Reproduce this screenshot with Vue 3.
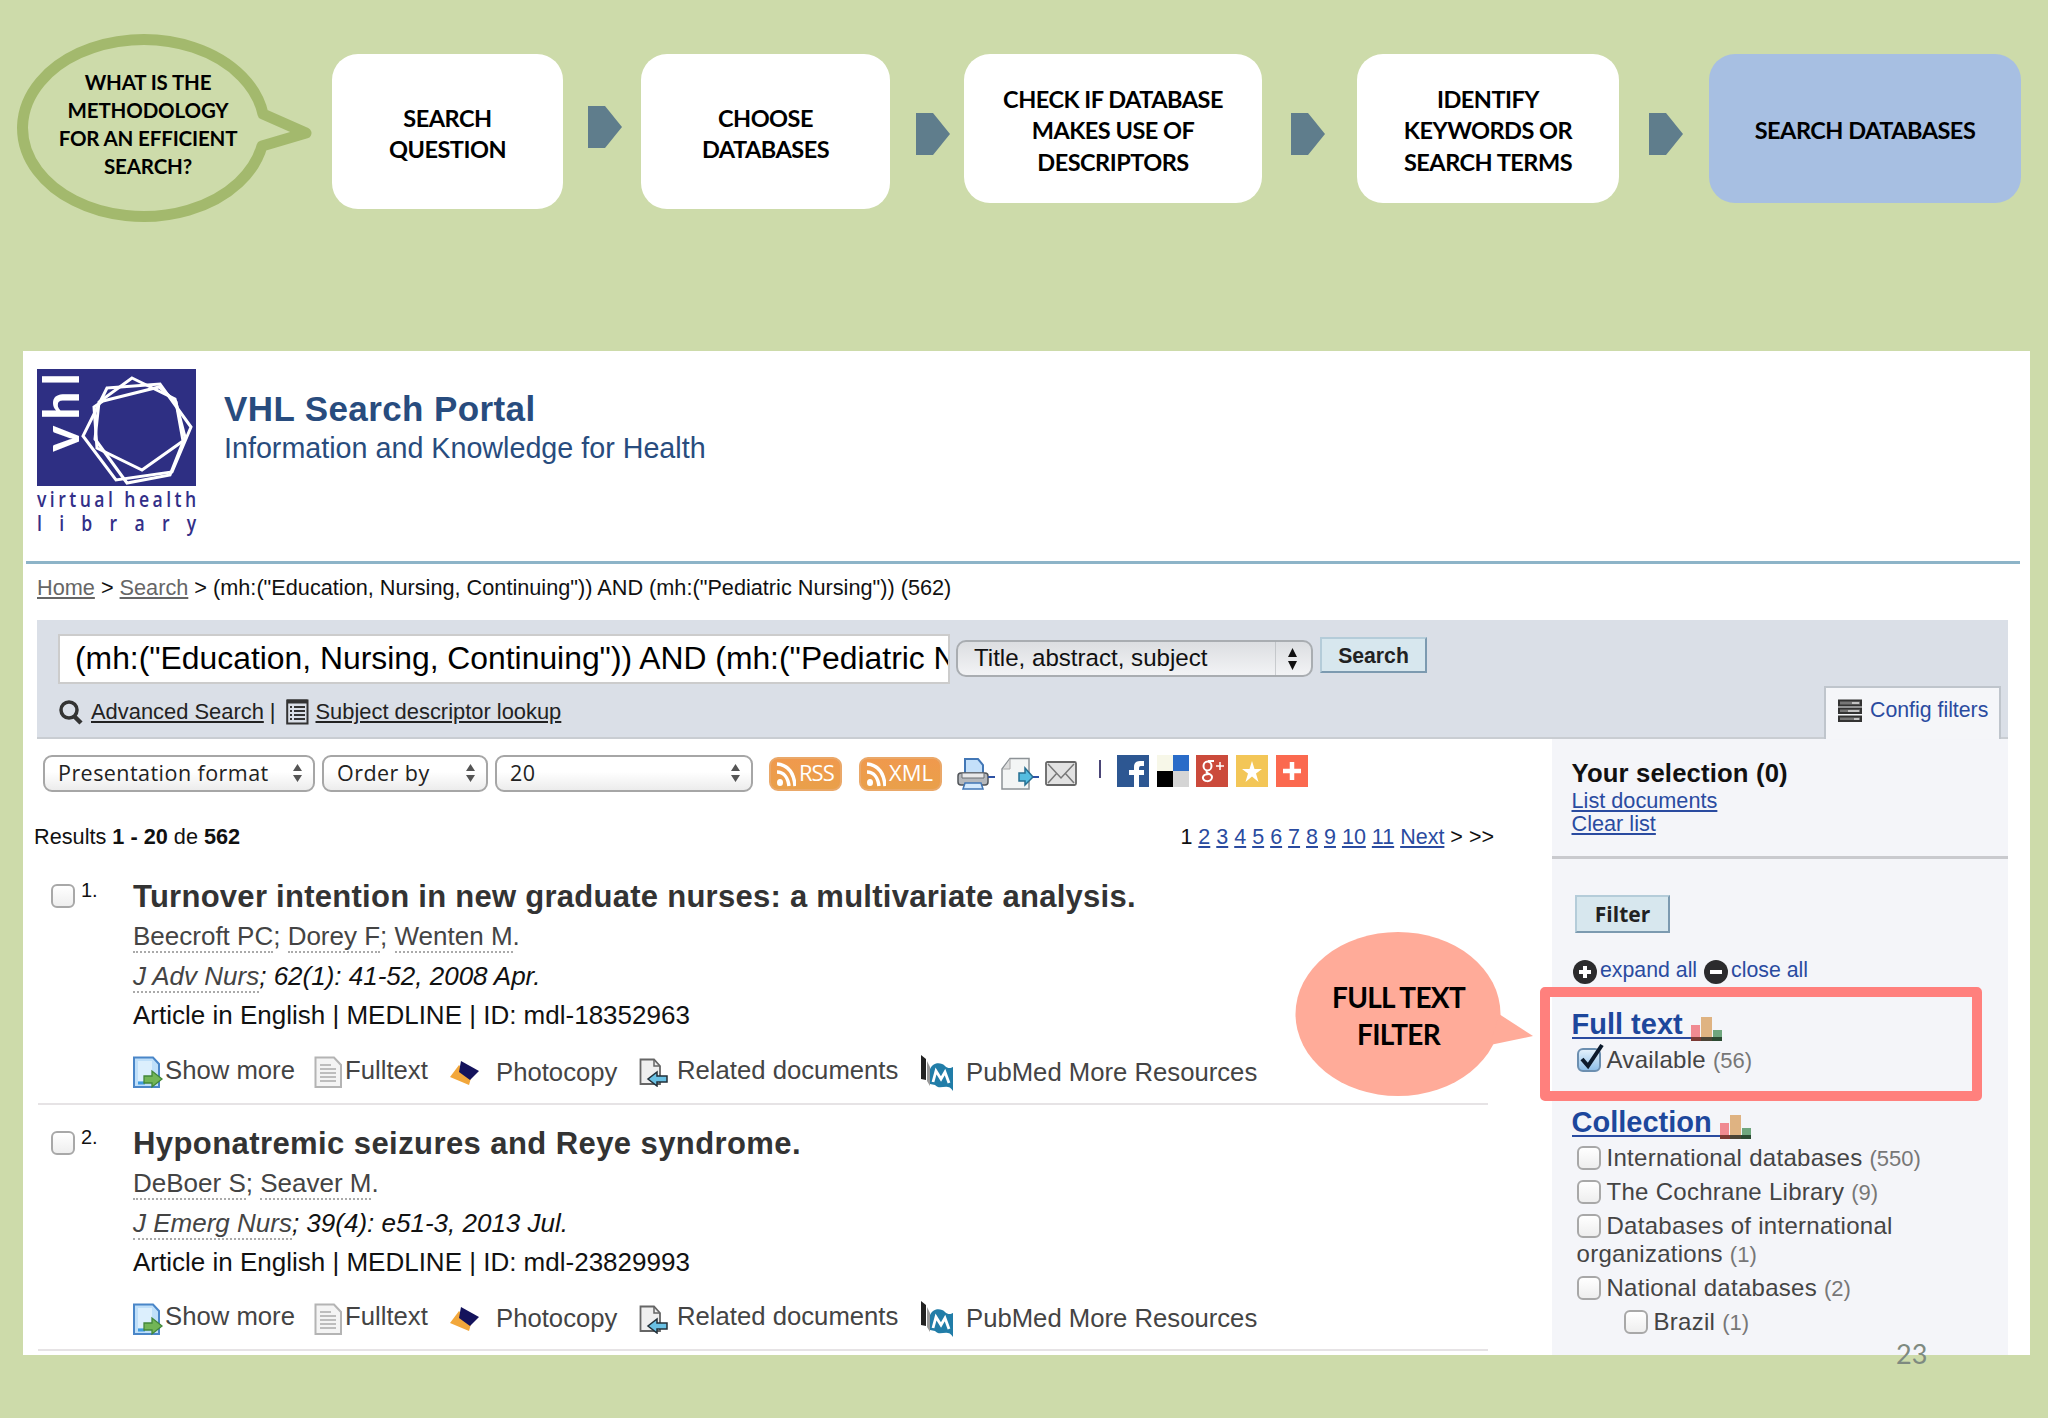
<template>
  <div class="slide">
    <!-- Methodology steps -->
    <div class="steps">
      <div class="bubble">
        <svg class="bubble-shape" width="300" height="196" viewBox="0 0 300 196">
          <path d="M 250 85 A 121 88.500 0 1 0 249 117 L 293 104 Z" fill="none" stroke="#a3b96d" stroke-width="11" stroke-linejoin="round" />
        </svg>
        <p class="bubble-text">WHAT IS THE<br />METHODOLOGY<br />FOR AN EFFICIENT<br />SEARCH?</p>
      </div>
      <template v-for="step in steps" :key="step.id">
        <div class="step" :class="'step-' + step.id">
          <span v-for="line in step.lines" :key="line">{{ line }}</span>
        </div>
        <svg v-if="step.id < 5" class="arrow" :class="'arrow-' + step.id" width="34" height="42" viewBox="0 0 34 42">
          <path d="M0 0H17L34 21L17 42H0Z" fill="#5f7d8c" />
        </svg>
      </template>
    </div>

    <!-- Search portal -->
    <div class="portal">
      <div class="header">
        <svg class="logo" width="160" height="176" viewBox="0 0 160 176">
          <rect width="159" height="117" fill="#2e2f83" />
          <g fill="none" stroke="#fff" stroke-width="3">
            <path d="M95 9L138 30L148 68L133 106L90 114L58 70L62 33Z" />
            <path d="M70 19L123 15L154 58L135 103L79 111L46 67Z" />
            <path d="M66 32L122 18L139 33L146 72L105 101L60 79L57 38Z" />
          </g>
          <text class="logo-vhl" transform="translate(42 83) rotate(-90)" textLength="79">vhl</text>
          <text class="logo-text" transform="scale(0.8 1)" x="0" y="138" textLength="199">virtual health</text>
          <text class="logo-text" transform="scale(0.8 1)" x="0" y="162" textLength="199">library</text>
        </svg>
        <div class="titles">
          <h1>VHL Search Portal</h1>
          <h2>Information and Knowledge for Health</h2>
        </div>
      </div>

      <div class="breadcrumb">
        <a>Home</a> &gt; <a>Search</a> &gt; (mh:("Education, Nursing, Continuing")) AND (mh:("Pediatric Nursing")) (562)
      </div>

      <div class="search">
        <div class="search-row">
          <div class="query">(mh:("Education, Nursing, Continuing")) AND (mh:("Pediatric N</div>
          <div class="field">
            <span>Title, abstract, subject</span>
            <svg width="36" height="37" viewBox="0 0 36 37">
              <path d="M0 1V36" stroke="#a5a9ad" stroke-width="1" />
              <path d="M13 17L17.500 8L22 17ZM13 21L17.500 30L22 21Z" fill="#111" />
            </svg>
          </div>
          <div class="btn btn-search">Search</div>
        </div>
        <div class="search-links">
          <svg width="25" height="26" viewBox="0 0 25 26">
            <circle cx="10" cy="11" r="8" fill="none" stroke="#333" stroke-width="3.500" />
            <path d="M15 17L22 24" stroke="#333" stroke-width="4.500" />
          </svg>
          <a class="advanced">Advanced Search</a>
          <span class="bar">|</span>
          <svg width="23" height="26" viewBox="0 0 23 26">
            <path d="M1.200 1.500H21.500V24.500H1.200Z" fill="none" stroke="#333" stroke-width="2" />
            <path d="M1 2.500H21.500" stroke="#333" stroke-width="4" />
            <path d="M4 8H6M8 8H19M4 12H6M8 12H19M4 16H6M8 16H19M4 20H6M8 20H19" stroke="#333" stroke-width="2" />
          </svg>
          <a class="lookup">Subject descriptor lookup</a>
          <div class="tab">
            <svg width="25" height="24" viewBox="0 0 25 24">
              <path d="M1 1.500H23V6.500H1ZM1 9.500H23V14H1ZM1 17.500H23V22H1Z" fill="#777" stroke="#333" stroke-width="2" />
              <path d="M14 4H21M10 12H21M16 20H21" stroke="#ddd" stroke-width="1.500" />
            </svg>
            <span>Config filters</span>
          </div>
        </div>
      </div>

      <div class="content">
        <div class="main">
          <div class="toolbar">
            <div v-for="item in selects" :key="item.label" class="select" :class="item.size">
              <span>{{ item.label }}</span>
              <svg width="9" height="18" viewBox="0 0 9 18"><path d="M0 7L4.500 0L9 7ZM0 11L4.500 18L9 11Z" fill="#555" /></svg>
            </div>
            <div v-for="feed in ['RSS', 'XML']" :key="feed" class="feed" :class="feed.toLowerCase()">
              <svg width="20" height="26" viewBox="0 0 20 26">
                <g fill="none" stroke="#fff" stroke-width="3.500">
                  <path d="M1 3C12 4 18 12 19 25" />
                  <path d="M1 11C8 11 12 17 13 25" />
                </g>
                <ellipse cx="4" cy="21.500" rx="3" ry="3.500" fill="#fff" />
              </svg>
              <span>{{ feed }}</span>
            </div>
            <svg class="printer" width="38" height="34" viewBox="0 0 38 34">
              <path d="M8 2H21L26 8V18H8Z" fill="#c4e0fa" stroke="#4277b6" stroke-width="2" />
              <rect x="1" y="16" width="30" height="12" rx="3" fill="#b5b8bc" stroke="#505459" stroke-width="1.500" />
              <path d="M5 16H27V21H5Z" fill="#e9e9ea" stroke="#6a6e73" />
              <path d="M8 26H24L26 32H6Z" fill="#d5eafd" stroke="#4277b6" stroke-width="1.500" />
              <path d="M31 20H38" stroke="#2d51a3" stroke-width="2" />
            </svg>
            <svg class="export" width="38" height="34" viewBox="0 0 38 34">
              <path d="M9 1.500H28V32H1V12Z" fill="#f3f5f5" stroke="#8d9296" stroke-width="1.500" />
              <path d="M2 12H9V2" fill="#ddd" stroke="#aaa" />
              <path d="M18 16H24V11L32 20L24 28V24H18Z" fill="#55bde0" stroke="#276f91" stroke-width="1.500" />
              <path d="M32 20H38" stroke="#2d51a3" stroke-width="2" />
            </svg>
            <svg class="mail" width="32" height="25" viewBox="0 0 32 25">
              <rect x="1" y="1" width="30" height="23" rx="1.500" fill="#e2e2e2" stroke="#666" stroke-width="1.800" />
              <path d="M3 3L16 17L29 3M3 22L12 12M29 22L20 12" fill="none" stroke="#777" stroke-width="1.500" />
            </svg>
            <span class="separator"></span>
            <div class="social">
              <svg width="32" height="32" viewBox="0 0 32 32">
                <rect width="32" height="32" fill="#2d5792" />
                <path d="M17 32V20H12V15H17V12C17 8 19 6 23 6H27V11H24C22 11 22 12 22 15H27V20H22V32Z" fill="#fff" />
              </svg>
              <svg width="32" height="32" viewBox="0 0 32 32">
                <path d="M0 0H16V16H0Z" fill="#f7f7e8" />
                <path d="M16 0H32V16H16Z" fill="#2a6cc8" />
                <path d="M0 16H16V32H0Z" fill="#000" />
                <path d="M16 16H32V32H16Z" fill="#d5d5d5" />
              </svg>
              <svg width="32" height="32" viewBox="0 0 32 32">
                <rect width="32" height="32" fill="#cb4a3b" />
                <g fill="none" stroke="#fff" stroke-width="2">
                  <ellipse cx="11.500" cy="11" rx="4" ry="4.500" />
                  <path d="M18 6H12M11 16C9 19 16 18 16 22C16 28 6 27 7 22C8 19 12 19 13 19" />
                  <path d="M20 11H28M24 7V15" stroke-width="1.500" />
                </g>
              </svg>
              <svg width="32" height="32" viewBox="0 0 32 32">
                <rect width="32" height="32" fill="#f3c657" />
                <path d="M16 6L18.500 14H26L20 18.500L22.500 27L16 21.500L9.500 27L12 18.500L6 14H13.500Z" fill="#fff" />
              </svg>
              <svg width="32" height="32" viewBox="0 0 32 32">
                <rect width="32" height="32" fill="#fb694f" />
                <path d="M16 7V25M7 16H25" stroke="#fff" stroke-width="4.500" />
              </svg>
            </div>
          </div>

          <div class="summary">
            <div class="count">Results <b>1 - 20</b> de <b>562</b></div>
            <div class="pages">1 <template v-for="page in pages" :key="page"><a>{{ page }}</a>&nbsp;</template>&gt; &gt;&gt;</div>
          </div>

          <!-- Result list -->
          <div v-for="result in results" :key="result.number" class="result">
            <span class="check"></span>
            <span class="number">{{ result.number }}.</span>
            <div class="record">
              <h3 :class="'title-' + result.number">{{ result.title }}</h3>
              <p class="authors">
                <template v-for="(author, i) in result.authors" :key="author">
                  <a>{{ author }}</a>{{ i < result.authors.length - 1 ? '; ' : '.' }}
                </template>
              </p>
              <p class="journal"><a>{{ result.journal }}</a>{{ result.issue }}</p>
              <p class="source">Article in English | MEDLINE | ID: {{ result.mdl }}</p>
              <div class="actions">
                <svg width="31" height="33" viewBox="0 0 31 33">
                  <path d="M1 1.500H20L26 8V31H1Z" fill="#bfdff9" stroke="#4a86c8" stroke-width="2" />
                  <path d="M5 5H19V25H5Z" fill="#dceffd" />
                  <path d="M5 27H12" stroke="#3f9be0" stroke-width="3" />
                  <path d="M11 20H19V15L29 23L19 31V27H11Z" fill="#72b556" stroke="#42873a" stroke-width="1.300" />
                </svg>
                <span class="more">Show more</span>
                <svg width="29" height="33" viewBox="0 0 29 33">
                  <path d="M1.500 1.500H20L27 9V31H1.500Z" fill="#f4f4f4" stroke="#b4b4b4" stroke-width="2" />
                  <path d="M6 9H17M6 13H22M6 17H22M6 21H22M6 25H22" stroke="#aaa" stroke-width="1.500" />
                </svg>
                <span class="fulltext">Fulltext</span>
                <svg class="diamond" width="30" height="26" viewBox="0 0 30 26">
                  <path d="M9 5L0 17L19 25L21 18Z" fill="#f2a73b" />
                  <path d="M11 1L29 11L20 20L9 12Z" fill="#14135c" />
                </svg>
                <span class="photocopy">Photocopy</span>
                <svg class="related-icon" width="29" height="29" viewBox="0 0 29 29">
                  <path d="M1.500 1.500H15L21 8V26H1.500Z" fill="#efefef" stroke="#666" stroke-width="1.800" />
                  <path d="M15 1.500V8H21" fill="none" stroke="#666" stroke-width="1.500" />
                  <path d="M28 18H18V14L9 21L18 28V24H28Z" fill="#6ac1e4" stroke="#222f38" stroke-width="1.500" />
                </svg>
                <span class="related">Related documents</span>
                <svg class="pubmed-icon" width="33" height="36" viewBox="0 0 33 36">
                  <path d="M0 0L5 4V25L0 24Z" fill="#222" />
                  <path d="M6 6L9 12V31L6 26Z" fill="#999" />
                  <path d="M9 14C13 6 21 8 24 11C27 14 30 13 32 12V36C27 27 19 36 14 30L9 29Z" fill="#217da8" />
                  <path d="M12 27L15 16L20 24L24 17L28 28" fill="none" stroke="#fff" stroke-width="2.800" />
                </svg>
                <span class="pubmed">PubMed More Resources</span>
              </div>
            </div>
          </div>
        </div>

        <!-- Filter column -->
        <div class="sidebar">
          <div class="selection">
            <h4>Your selection (0)</h4>
            <a>List documents</a>
            <a>Clear list</a>
          </div>
          <div class="btn btn-filter">Filter</div>
          <div class="toggles">
            <svg width="24" height="24" viewBox="0 0 24 24">
              <circle cx="12" cy="12" r="12" fill="#2b2b2d" />
              <path d="M12 6V18M6 12H18" stroke="#fff" stroke-width="4" />
            </svg>
            <span class="expand">expand all</span>
            <svg width="24" height="24" viewBox="0 0 24 24">
              <circle cx="12" cy="12" r="12" fill="#2b2b2d" />
              <path d="M6 12H18" stroke="#fff" stroke-width="4" />
            </svg>
            <span>close all</span>
          </div>
          <div v-for="group in groups" :key="group.name" class="group">
            <div class="group-title">
              <span>{{ group.name }}</span>
              <svg width="31" height="24" viewBox="0 0 31 24">
                <rect y="8" width="9" height="13" fill="#f08a92" />
                <rect x="10" width="11" height="21" fill="#dfb382" />
                <rect x="22" y="13" width="9" height="8" fill="#6fa67e" />
                <rect y="20" width="31" height="4" fill="#4b4436" />
                <rect y="20" width="10" height="4" fill="#7c3a35" />
                <rect x="21" y="20" width="10" height="4" fill="#2b4a32" />
              </svg>
            </div>
            <p v-for="item in group.items" :key="item.name" class="item" :class="{ nested: item.nested }">
              <span class="check" :class="{ checked: item.checked }">
                <svg v-if="item.checked" width="30" height="30" viewBox="0 0 30 30"><path d="M5 16L11 23L25 2" fill="none" stroke="#0c1a2c" stroke-width="4" /></svg>
              </span>{{ item.name }} <small>({{ item.count }})</small>
            </p>
          </div>
        </div>
      </div>
    </div>

    <!-- Annotations over the portal -->
    <div class="highlight"></div>
    <div class="callout">
      <svg class="callout-shape" width="240" height="166" viewBox="0 0 240 166">
        <ellipse cx="103" cy="83" rx="102.500" ry="82" fill="#ffab99" />
        <path d="M204 83L238 105L195 114Z" fill="#ffab99" />
      </svg>
      <p>FULL TEXT<br />FILTER</p>
    </div>
    <div class="page-number">23</div>
  </div>
</template>

<script setup>
import { ref } from 'vue';

const steps = ref([
  { id: 1, lines: ['SEARCH', 'QUESTION'] },
  { id: 2, lines: ['CHOOSE', 'DATABASES'] },
  { id: 3, lines: ['CHECK IF DATABASE', 'MAKES USE OF', 'DESCRIPTORS'] },
  { id: 4, lines: ['IDENTIFY', 'KEYWORDS OR', 'SEARCH TERMS'] },
  { id: 5, lines: ['SEARCH DATABASES'] },
]);

const selects = ref([
  { label: 'Presentation format', size: 'large' },
  { label: 'Order by', size: 'small' },
  { label: '20', size: 'medium' },
]);

const pages = ['2', '3', '4', '5', '6', '7', '8', '9', '10', '11', 'Next'];

const results = ref([
  {
    number: 1,
    title: 'Turnover intention in new graduate nurses: a multivariate analysis.',
    authors: ['Beecroft PC', 'Dorey F', 'Wenten M'],
    journal: 'J Adv Nurs',
    issue: '; 62(1): 41-52, 2008 Apr.',
    mdl: 'mdl-18352963',
  },
  {
    number: 2,
    title: 'Hyponatremic seizures and Reye syndrome.',
    authors: ['DeBoer S', 'Seaver M'],
    journal: 'J Emerg Nurs',
    issue: '; 39(4): e51-3, 2013 Jul.',
    mdl: 'mdl-23829993',
  },
]);

const groups = ref([
  { name: 'Full text', items: [{ name: 'Available', count: 56, checked: true }] },
  {
    name: 'Collection',
    items: [
      { name: 'International databases', count: 550 },
      { name: 'The Cochrane Library', count: 9 },
      { name: 'Databases of international organizations', count: 1 },
      { name: 'National databases', count: 2 },
      { name: 'Brazil', count: 1, nested: true },
    ],
  },
]);
</script>

<style>
body {
  margin: 0;
}
</style>

<style scoped>
.slide {
  position: relative;
  width: 2048px;
  height: 1418px;
  overflow: hidden;
  background: #cddbaa;
  font-family: "Liberation Sans", Arial, sans-serif;
  color: #111;
}

h1, h2, h3, h4, p {
  margin: 0;
  white-space: nowrap;
}

svg {
  flex: none;
  display: block;
}

/* Steps */
.steps {
  display: flex;
  align-items: flex-start;
  height: 351px;
  box-sizing: border-box;
  padding: 29px 0 0 13px;
  font-family: Lato, sans-serif;
  font-weight: bold;
  color: #000;
}

.bubble {
  display: grid;
  width: 319px;
}

.bubble-shape, .bubble-text {
  grid-area: 1 / 1;
}

.bubble-text {
  width: 270px;
  padding-top: 39px;
  text-align: center;
  font-size: 20.500px;
  line-height: 28px;
  letter-spacing: -0.150px;
}

.step {
  display: flex;
  flex: none;
  flex-direction: column;
  align-items: center;
  justify-content: center;
  height: 149px;
  margin-top: 25px;
  padding-top: 5px;
  box-sizing: border-box;
  border-radius: 26px;
  background: #fff;
  font-size: 23.500px;
  line-height: 31.300px;
  letter-spacing: -0.500px;
  white-space: nowrap;
}

.step-1 { width: 231px; height: 155px; }
.step-2 { width: 249px; height: 155px; }
.step-3 { width: 298px; }
.step-4 { width: 262px; }
.step-5 { width: 312px; background: #a7bfe2; }

.arrow {
  margin-top: 84px;
}

.arrow-1 { margin: 77px 19px 0 25px; }
.arrow-2 { margin-left: 26px; margin-right: 14px; }
.arrow-3 { margin-left: 29px; margin-right: 32px; }
.arrow-4 { margin-left: 30px; margin-right: 26px; }

/* Portal */
.portal {
  width: 2007px;
  height: 1004px;
  margin-left: 23px;
  overflow: hidden;
  background: #fff;
}

.header {
  display: flex;
  height: 210px;
  margin: 0 10px 0 3px;
  padding: 0 0 0 11px;
  border-bottom: 3px solid #8db4c8;
}

.logo {
  margin-top: 18px;
  overflow: visible;
}

.logo-vhl {
  font: bold 50px Lato, sans-serif;
  fill: #fff;
}

.logo-text {
  font: 600 22px "Open Sans", sans-serif;
  fill: #332f88;
}

.titles {
  padding: 36px 0 0 27px;
  color: #284c7e;
}

h1 {
  font-size: 35px;
  line-height: 44px;
  letter-spacing: 0.400px;
}

h2 {
  font-size: 28.700px;
  font-weight: normal;
  line-height: 34px;
}

.breadcrumb {
  height: 56px;
  padding-left: 14px;
  font-size: 21.700px;
  line-height: 48px;
  white-space: nowrap;
}

.breadcrumb a {
  color: #666;
  text-decoration: underline;
}

/* Search area */
.search {
  width: 1971px;
  height: 119px;
  margin-left: 14px;
  box-sizing: border-box;
  padding-top: 14px;
  border-bottom: 2px solid #c9cdd2;
  background: #dadfe7;
}

.search-row {
  display: flex;
  padding-left: 21px;
}

.query {
  width: 892px;
  height: 50px;
  box-sizing: border-box;
  padding-left: 15px;
  border: 2px solid #ccc;
  background: #fff;
  overflow: hidden;
  font-size: 31.850px;
  line-height: 45px;
  white-space: nowrap;
  color: #000;
}

.field {
  display: flex;
  justify-content: space-between;
  width: 357px;
  height: 37px;
  margin: 6px 0 0 6px;
  box-sizing: border-box;
  padding-left: 16px;
  border: 2px solid #a9adb1;
  border-radius: 10px;
  background: linear-gradient(#dcdee1, #f2f3f5);
  font-size: 24.100px;
  line-height: 31px;
}

.field svg {
  margin-top: -2px;
}

.btn {
  box-sizing: border-box;
  border: 2px solid #b4ccd9;
  border-right-color: #7c9ab0;
  border-bottom-color: #7c9ab0;
  background: #d7e7ee;
  font-weight: bold;
  text-align: center;
  color: #222;
}

.btn-search {
  width: 107px;
  height: 36px;
  margin: 3px 0 0 7px;
  font-size: 21.200px;
  line-height: 33px;
}

.search-links {
  display: flex;
  align-items: center;
  height: 55px;
  padding-left: 22px;
  font-size: 21.900px;
  color: #222;
}

.search-links > a {
  text-decoration: underline;
}

.advanced {
  margin-left: 7px;
}

.bar {
  margin: 0 10px 0 6px;
}

.lookup {
  margin-left: 7px;
}

.tab {
  display: flex;
  align-items: center;
  gap: 7px;
  width: 177px;
  height: 53px;
  margin: 2px 7px 0 auto;
  box-sizing: border-box;
  padding: 0 0 6px 12px;
  border: 2px solid #bfc5cc;
  border-bottom: 0;
  background: #f5f6f9;
  font-size: 21.300px;
  color: #2a4ba0;
}

/* Toolbar */
.content {
  display: flex;
}

.main {
  flex: none;
  width: 1529px;
}

.toolbar {
  display: flex;
  align-items: center;
  height: 37px;
  padding: 16px 0 0 20px;
}

.select {
  display: flex;
  align-items: center;
  justify-content: space-between;
  height: 37px;
  box-sizing: border-box;
  padding: 0 11px 2px 13px;
  border: 2px solid #a6a6a6;
  border-radius: 9px;
  background: linear-gradient(#fff 45%, #ececec);
  font-family: "Open Sans", sans-serif;
  font-size: 21.500px;
  letter-spacing: 0.450px;
  color: #222;
}

.select.large { width: 272px; }
.select.small { width: 166px; margin: 0 7px; }
.select.medium { width: 258px; }

.feed {
  display: flex;
  align-items: center;
  height: 34px;
  box-sizing: border-box;
  padding-left: 5px;
  border: 2px solid #eaa869;
  border-radius: 9px;
  background: linear-gradient(#f0994d, #e9a04a);
  font-family: "Open Sans", sans-serif;
  font-size: 22px;
  color: #fff;
}

.feed span {
  margin: -3px 0 0 3px;
}

.feed.rss { width: 73px; margin-left: 16px; letter-spacing: -1px; }
.feed.xml { width: 83px; margin-left: 17px; }

.printer { margin-left: 15px; }
.export { margin-left: 6px; }
.mail { margin-left: 6px; }

.separator {
  width: 2px;
  height: 18px;
  margin: 0 16px 10px 22px;
  background: #4b4677;
}

.social {
  display: flex;
  gap: 7.700px;
  margin-bottom: 5px;
}

.summary {
  display: flex;
  justify-content: space-between;
  margin: 33px 58px 9px 11px;
  font-size: 21.700px;
  line-height: 24px;
  color: #111;
}

.pages {
  font-size: 21.500px;
}

.pages a {
  color: #2a4ba0;
  text-decoration: underline;
}

/* Results */
.result {
  display: flex;
  width: 1450px;
  height: 246.700px;
  margin-left: 15px;
  box-sizing: border-box;
  border-bottom: 2px solid #e6e3e5;
}

.check {
  display: inline-block;
  flex: none;
  width: 24px;
  height: 24px;
  box-sizing: border-box;
  border: 2px solid #a8a8a8;
  border-radius: 6px;
  background: linear-gradient(#fff, #eee);
}

.result .check {
  margin: 26px 0 0 13px;
}

.number {
  width: 52px;
  padding: 21px 0 0 6px;
  box-sizing: border-box;
  font-size: 20px;
  line-height: 22px;
}

.record {
  margin-left: 6px;
}

.record p {
  font-size: 26px;
  line-height: 39.400px;
}

h3 {
  padding-top: 19px;
  font-size: 31px;
  line-height: 40px;
  color: #333;
}

.title-1 { letter-spacing: 0.270px; }
.title-2 { letter-spacing: 0.420px; }

.record .authors, .actions {
  color: #444;
}

.record p a {
  color: #444;
  border-bottom: 2px dotted #aaa;
}

.record .journal {
  margin-top: 0.500px;
  font-style: italic;
}

.actions {
  display: flex;
  align-items: center;
  height: 36px;
  margin-top: 19px;
  font-size: 25.700px;
  white-space: nowrap;
}

.actions span {
  flex: none;
  padding-bottom: 5px;
}

.more { width: 149px; margin-left: 1px; }
.fulltext { width: 105px; margin-left: 2px; }
.photocopy { width: 143px; margin-left: 16px; }
.related { width: 244px; margin-left: 9px; }
.pubmed { margin-left: 12px; }

.actions .photocopy, .actions .pubmed {
  padding-bottom: 1px;
}

/* Filter column */
.sidebar {
  width: 456px;
  height: 617px;
  background: #f4f5f9;
}

.selection {
  display: flex;
  flex-direction: column;
  align-items: flex-start;
  height: 120px;
  box-sizing: border-box;
  padding: 19px 0 0 19.500px;
  border-bottom: 3px solid #c9cace;
  margin-bottom: 1px;
  font-size: 21.700px;
  line-height: 23.300px;
}

.selection a {
  color: #2a4ba0;
  text-decoration: underline;
}

h4 {
  font-size: 25.700px;
  line-height: 31px;
  letter-spacing: 0.150px;
  color: #111;
}

.selection + .btn-filter {
  width: 95px;
  height: 38px;
  margin: 36px 0 0 23px;
  font: bold 21px/34px "Open Sans", sans-serif;
}

.toggles {
  display: flex;
  align-items: center;
  height: 28px;
  margin: 25px 0 22px 21px;
  font-size: 21.300px;
  color: #2a4ba0;
}

.toggles span {
  padding: 0 0 3px 3px;
}

.toggles .expand {
  padding-right: 7px;
}

.group {
  margin-left: 19.500px;
}

.group-title {
  display: flex;
  align-items: flex-start;
  width: fit-content;
  height: 31px;
  margin-bottom: 4px;
  box-sizing: border-box;
  border-bottom: 2px solid #2a4ba0;
  font-size: 29px;
  font-weight: bold;
  line-height: 32px;
  color: #1d479c;
}

.group-title svg {
  margin: 9px 0 0 8px;
}

.group + .group {
  margin-top: 29px;
}

.item {
  width: 400px;
  padding: 3px 0 3px 5px;
  font-size: 24px;
  line-height: 28px;
  letter-spacing: 0.280px;
  white-space: normal;
  color: #444;
}

.item.nested {
  padding-left: 52px;
}

.item .check {
  margin-right: 6px;
  vertical-align: -4px;
}

.item small {
  font-size: 22px;
  line-height: 1;
  letter-spacing: 0;
  color: #777;
}

.check.checked {
  border-color: #6c8fb0;
  background: linear-gradient(#e2f0fb, #8fc0ea);
}

.checked svg {
  margin: -7px 0 0 -2px;
}

/* Annotations */
.highlight {
  position: absolute;
  left: 1540px;
  top: 987px;
  width: 442px;
  height: 114px;
  box-sizing: border-box;
  border: 10px solid #ff807d;
  border-radius: 5px;
}

.callout {
  position: absolute;
  left: 1295px;
  top: 931px;
  display: grid;
}

.callout-shape, .callout p {
  grid-area: 1 / 1;
}

.callout p {
  width: 207px;
  padding-top: 48px;
  text-align: center;
  font: bold 28px/37px Lato, sans-serif;
  letter-spacing: -0.700px;
  color: #000;
}

.page-number {
  position: absolute;
  left: 1896px;
  top: 1336px;
  font: 27px/36px Lato, sans-serif;
  color: #7e8a80;
}
</style>
